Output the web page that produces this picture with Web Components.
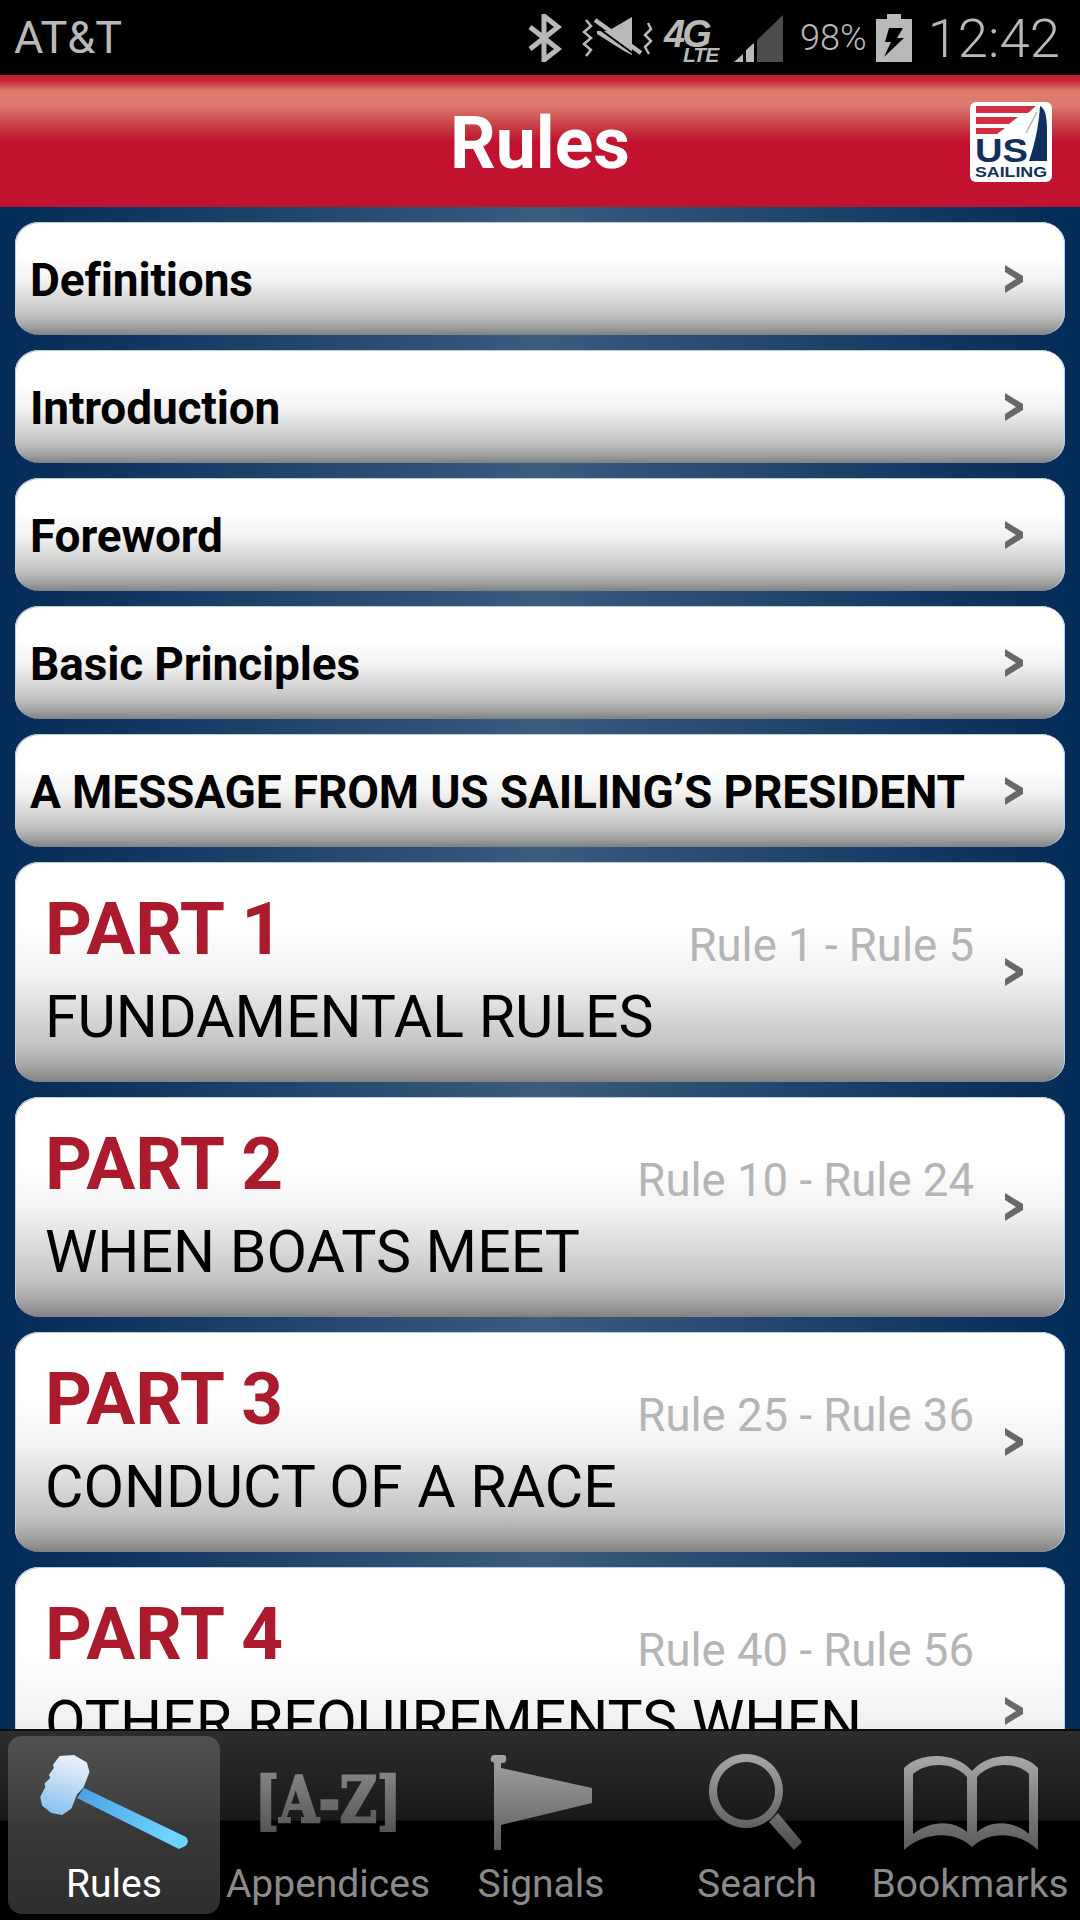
<!DOCTYPE html>
<html>
<head>
<meta charset="utf-8">
<title>Rules</title>
<style>
  html, body { margin: 0; padding: 0; background: #000; }
  body { width: 1080px; height: 1920px; overflow: hidden; font-family: Roboto, sans-serif; }
</style>
</head>
<body>
<rules-app></rules-app>

<script>
/**
 * Status bar along the top of the phone
 */
class StatusBar extends HTMLElement {
  constructor() {
    super();
    this.attachShadow({ mode: 'open' });
    this.shadowRoot.innerHTML = `
      <style>
        :host {
          display: flex;
          align-items: center;
          height: 75px;
          background: #000;
          color: #b9b9b9;
          font-family: Roboto, sans-serif;
          padding: 0 20px 0 14px;
          box-sizing: border-box;
        }
        .carrier { font-size: 45px; flex: 1; }
        .icons { display: flex; align-items: center; }
        svg { display: block; }
        .bt { margin-right: 19px; }
        .mute { margin-right: 11px; }
        .net { position: relative; width: 53px; height: 46px; margin-right: 17px; font-family: "Liberation Sans", sans-serif; font-weight: 700; font-style: italic; }
        .net span { position: absolute; line-height: 1; }
        .net .g { left: 0; top: 0; font-size: 38px; letter-spacing: -3px; }
        .net .lte { left: 19px; top: 29px; font-size: 21px; letter-spacing: -1px; }
        .signal { margin-right: 17px; }
        .pct { font-size: 36px; font-weight: 300; margin-right: 9px; }
        .batt { margin-right: 16px; }
        .time { font-size: 54.5px; font-weight: 300; }
      </style>
      <div class="carrier">AT&amp;T</div>
      <div class="icons">
        <svg class="bt" width="34" height="48" viewBox="0 0 34 48">
          <path d="M2 13 L30 35 L16 46 V2 L30 13 L2 35" fill="none" stroke="#b9b9b9" stroke-width="5"/>
        </svg>
        <svg class="mute" width="72" height="46" viewBox="0 0 72 46">
          <path d="M16 16 H27 L51 2 V40 L43 36 L16 19Z" fill="#b9b9b9"/>
          <path d="M16 6 L60 37 M13 10 L57 42" stroke="#000" stroke-width="2"/>
          <path d="M14 5 L60 38" stroke="#b9b9b9" stroke-width="4.5"/>
          <path d="M5 5 L10 11 L3 17 L10 23 L3 29 L10 35 L5 41 M67 8 L70 14 L64 20 L70 26 L64 32 L68 39" fill="none" stroke="#b9b9b9" stroke-width="2.5"/>
        </svg>
        <div class="net"><span class="g">4G</span><span class="lte">LTE</span></div>
        <svg class="signal" width="49" height="48" viewBox="0 0 49 48">
          <path d="M0 48 L9 40 V48Z M12 48 V36 L20 29 V48Z" fill="#b9b9b9"/>
          <path d="M23 48 V26 L49 1 V48Z" fill="#4d4d4d"/>
        </svg>
        <div class="pct">98%</div>
        <svg class="batt" width="36" height="48" viewBox="0 0 36 48">
          <path d="M11 0 H25 V5 H36 V48 H0 V5 H11Z" fill="#b9b9b9"/>
          <path d="M13 14 H27 L21 24 H28 L8 43 L15 28 H9Z" fill="#000"/>
        </svg>
        <div class="time">12:42</div>
      </div>
    `;
  }
}

/**
 * Red title bar with the logo on the right
 */
class AppHeader extends HTMLElement {
  constructor() {
    super();
    this.attachShadow({ mode: 'open' });
    this.shadowRoot.innerHTML = `
      <style>
        :host {
          display: flex;
          align-items: center;
          justify-content: center;
          position: relative;
          height: 132px;
          background: linear-gradient(180deg, #c5152f 0, #c62c38 6px, #dc7a6c 16px, #dc7a6c 30px, #c9474a 48px, #c1132f 66px, #c1132f 100%);
          color: #fff;
          font-family: Roboto, sans-serif;
          font-weight: 700;
          font-size: 71.5px;
        }
        .title { padding-top: 4px; }
        .logo { position: absolute; right: 28px; top: 27px; display: block; }
      </style>
      <div class="title"><slot></slot></div>
      <svg class="logo" width="82" height="80" viewBox="0 0 82 80">
        <rect width="82" height="80" rx="6" fill="#fff"/>
        <path d="M6 4 H66 L58 11 H6Z M6 15 H48 L39 22 H6Z M6 26 H35 L27 32 H6Z" fill="#d0303f"/>
        <path d="M70 4 C75 6 77 14 77 28 V59 H59 C65 42 69 22 70 4Z" fill="#12305e"/>
        <path d="M67 10 L56 31" stroke="#a9b6c8" stroke-width="1.5"/>
        <text x="5" y="60" font-family="Liberation Sans, sans-serif" font-weight="700" font-size="33" fill="#12305e" textLength="53" lengthAdjust="spacingAndGlyphs">US</text>
        <text x="5" y="75" font-family="Liberation Sans, sans-serif" font-weight="700" font-size="15" fill="#12305e" textLength="72" lengthAdjust="spacingAndGlyphs">SAILING</text>
      </svg>
    `;
  }
}

const CHEVRON = `
  <svg class="chevron" width="18" height="28" viewBox="0 0 18 28">
    <path d="M0 0 L18 11 V17 L0 28 V21 L11 14 L0 7Z" fill="#686868"/>
  </svg>`;

/**
 * One short row: bold black label and a chevron
 */
class RuleRow extends HTMLElement {
  constructor() {
    super();
    this.attachShadow({ mode: 'open' });
    this.shadowRoot.innerHTML = `
      <style>
        :host {
          display: flex;
          align-items: center;
          height: 113px;
          flex: none;
          box-sizing: border-box;
          padding: 0 42px 0 15px;
          border-radius: 24px / 22px;
          background: linear-gradient(180deg, #fff 0, #fff 30%, #f2f2f2 52%, #c6c6c6 80%, #a8a8a8 91%, #828282 100%);
          box-shadow: inset 1px 1px 0 #bccddd, inset -1px 0 0 #bccddd;
          font-family: Roboto, sans-serif;
          font-weight: 700;
          font-size: 46px;
          letter-spacing: -0.15px;
          color: #000;
        }
        .label { flex: 1; white-space: nowrap; padding-top: 3px; }
        svg { display: block; flex: none; }
      </style>
      <div class="label"><slot></slot></div>
      ${CHEVRON}
    `;
  }
}

/**
 * Taller row for a part of the rulebook
 */
class PartRow extends HTMLElement {
  constructor() {
    super();
    this.attachShadow({ mode: 'open' });
    this.shadowRoot.innerHTML = `
      <style>
        :host {
          display: flex;
          align-items: center;
          height: var(--row-height, 220px);
          flex: none;
          box-sizing: border-box;
          padding: 0 42px 0 31px;
          border-radius: 24px / 22px;
          background: linear-gradient(180deg, #fff 0, #fff 30%, #f2f2f2 52%, #c6c6c6 82%, #a8a8a8 92%, #828282 100%);
          box-shadow: inset 1px 1px 0 #bccddd, inset -1px 0 0 #bccddd;
          font-family: Roboto, sans-serif;
          color: #000;
        }
        .body {
          flex: 1;
          align-self: flex-start;
          display: grid;
          grid-template-columns: 1fr auto;
          padding-top: 26px;
          margin-right: 31px;
        }
        .part { font-weight: 700; font-size: 73px; line-height: 82px; color: #ab1a2d; margin-left: -1px; }
        .range { font-size: 45.5px; line-height: 54px; color: #b5b5b5; padding-top: 31px; }
        .title { grid-column: 1 / -1; font-size: 59px; line-height: 70px; white-space: nowrap; margin-top: 9px; margin-left: -1px; }
        svg { display: block; flex: none; }
      </style>
      <div class="body">
        <div class="part"></div>
        <div class="range"></div>
        <div class="title"><slot></slot></div>
      </div>
      ${CHEVRON}
    `;
  }

  connectedCallback() {
    this.shadowRoot.querySelector('.part').textContent = this.getAttribute('part-name') || '';
    this.shadowRoot.querySelector('.range').textContent = this.getAttribute('range') || '';
  }
}

/**
 * One entry of the bottom tab bar
 */
class TabItem extends HTMLElement {
  constructor() {
    super();
    this.attachShadow({ mode: 'open' });
    this.shadowRoot.innerHTML = `
      <style>
        :host {
          display: flex;
          flex-direction: column;
          align-items: center;
          box-sizing: border-box;
          height: 178px;
          border-radius: 14px;
          color: #8a8a8a;
          font-family: Roboto, sans-serif;
          font-size: 39px;
          white-space: nowrap;
        }
        :host([active]) {
          color: #fff;
          background: linear-gradient(180deg, #525252 0, #3c3c3c 85px, #393939 85px, #2e2e2e 100%);
        }
        .icon { height: 100px; margin-top: 18px; display: flex; justify-content: center; }
        .label { line-height: 44px; margin-top: 8px; }
      </style>
      <div class="icon"><slot name="icon"></slot></div>
      <div class="label"><slot></slot></div>
    `;
  }
}

/**
 * Bottom tab bar, columns are uneven in the app so they are set by hand
 */
class TabBar extends HTMLElement {
  constructor() {
    super();
    this.attachShadow({ mode: 'open' });
    this.shadowRoot.innerHTML = `
      <style>
        :host {
          display: grid;
          grid-template-columns: 212px 216px 210px 222px 204px;
          height: 191px;
          flex: none;
          box-sizing: border-box;
          padding: 5px 0 0 8px;
          border-top: 2px solid #0c0c0c;
          background: linear-gradient(180deg, #2d2d2d 0, #191919 89px, #000 90px, #000 100%);
        }
      </style>
      <slot></slot>
    `;
  }
}

/**
 * The page: status bar, header, scrolled list and tabs
 */
class RulesApp extends HTMLElement {
  constructor() {
    super();
    this.attachShadow({ mode: 'open' });
    const rows = [
      'Definitions', 'Introduction', 'Foreword', 'Basic Principles',
      'A MESSAGE FROM US SAILING\u2019S PRESIDENT'
    ].map(t => `<rule-row>${t}</rule-row>`).join('');

    const parts = [
      ['PART 1', 'Rule 1 - Rule 5', 'FUNDAMENTAL RULES', ''],
      ['PART 2', 'Rule 10 - Rule 24', 'WHEN BOATS MEET', ''],
      ['PART 3', 'Rule 25 - Rule 36', 'CONDUCT OF A RACE', ''],
      ['PART 4', 'Rule 40 - Rule 56', 'OTHER REQUIREMENTS WHEN', '--row-height:288px']
    ].map(([p, r, t, s]) => `<part-row part-name="${p}" range="${r}" style="${s}">${t}</part-row>`).join('');

    const grad = (id, from, to) => `
      <defs><linearGradient id="${id}" x1="0" y1="0" x2="0" y2="1">
        <stop offset="0" stop-color="${from}"/><stop offset="1" stop-color="${to}"/>
      </linearGradient></defs>`;

    this.shadowRoot.innerHTML = `
      <style>
        :host {
          display: flex;
          flex-direction: column;
          width: 1080px;
          height: 1920px;
          overflow: hidden;
        }
        main {
          flex: 1;
          min-height: 0;
          overflow: hidden;
          display: flex;
          flex-direction: column;
          gap: 15px;
          padding: 15px;
          background: linear-gradient(90deg, #022b57 0, #3b5c7f 50%, #022b57 100%);
        }
        svg { display: block; }
      </style>
      <status-bar></status-bar>
      <app-header>Rules</app-header>
      <main>${rows}${parts}</main>
      <tab-bar>
        <tab-item active>
          <svg slot="icon" width="150" height="100" viewBox="0 0 150 100">
            <defs>
              <linearGradient id="gavelHead" x1="0.4" y1="0" x2="0.2" y2="1">
                <stop offset="0" stop-color="#e8f0fb"/><stop offset="1" stop-color="#86c0ee"/>
              </linearGradient>
              <linearGradient id="gavelShaft" x1="0" y1="0" x2="1" y2="0.5">
                <stop offset="0" stop-color="#4a9fe6"/><stop offset="1" stop-color="#6dd6ff"/>
              </linearGradient>
            </defs>
            <path d="M45 34 L147 83 C150 86 149 90 146 92 L140 95 L38 44Z" fill="url(#gavelShaft)"/>
            <path d="M21 3 L35 2 L47 9 L49.5 18 L43.6 33 L37 40 L34 48 L31.6 54 L23 60 L12.6 58 L4 51 L2.3 43 L7.5 33 L6.5 30 L12.6 24 L11 21 L16 14 L15 11 Z" fill="url(#gavelHead)" stroke="url(#gavelHead)" stroke-width="2" stroke-linejoin="round"/>
          </svg>
          Rules
        </tab-item>
        <tab-item>
          <svg slot="icon" width="150" height="100" viewBox="0 0 150 100">
            ${grad('azFill', '#8c8c8c', '#505050')}
            <text transform="translate(2 68) scale(1 1.25)" font-family="DejaVu Serif, serif" font-weight="700" font-size="51" fill="url(#azFill)" stroke="url(#azFill)" stroke-width="2">[A-Z]</text>
          </svg>
          Appendices
        </tab-item>
        <tab-item>
          <svg slot="icon" width="150" height="100" viewBox="0 0 150 100">
            ${grad('flagFill', '#a4a4a4', '#5a5a5a')}
            <path d="M28 9 L25 7 C24 3 26 1 28 1 H38 C41 1 41 8 38 9 H35 V14 L126 34 V49 L35 71 V96 H28Z" fill="url(#flagFill)"/>
          </svg>
          Signals
        </tab-item>
        <tab-item>
          <svg slot="icon" width="150" height="100" viewBox="0 0 150 100">
            ${grad('lensStroke', '#a8a8a8', '#4c4c4c')}
            <path fill-rule="evenodd" fill="url(#lensStroke)" d="M64 0 A37 37 0 1 1 63.9 0Z M64 8 A29 29 0 1 0 64.1 8Z M87 68 L96 59 L120 88 L112 96Z"/>
          </svg>
          Search
        </tab-item>
        <tab-item>
          <svg slot="icon" width="150" height="100" viewBox="0 0 150 100">
            ${grad('bookFill', '#a8a8a8', '#5a5a5a')}
            <path fill-rule="evenodd" fill="url(#bookFill)" d="M9 14 C25 -2 60 -3 77 17 C94 -3 129 -2 143 14 V96 C125 78 95 76 77 93 C59 76 29 78 9 96Z M18 20 V80 C36 66 58 66 72 78 V23 C58 7 32 8 18 20Z M82 23 V78 C96 66 118 66 134 80 V20 C122 8 96 7 82 23Z"/>
          </svg>
          Bookmarks
        </tab-item>
      </tab-bar>
    `;
  }
}

customElements.define('status-bar', StatusBar);
customElements.define('app-header', AppHeader);
customElements.define('rule-row', RuleRow);
customElements.define('part-row', PartRow);
customElements.define('tab-item', TabItem);
customElements.define('tab-bar', TabBar);
customElements.define('rules-app', RulesApp);
</script>
</body>
</html>
